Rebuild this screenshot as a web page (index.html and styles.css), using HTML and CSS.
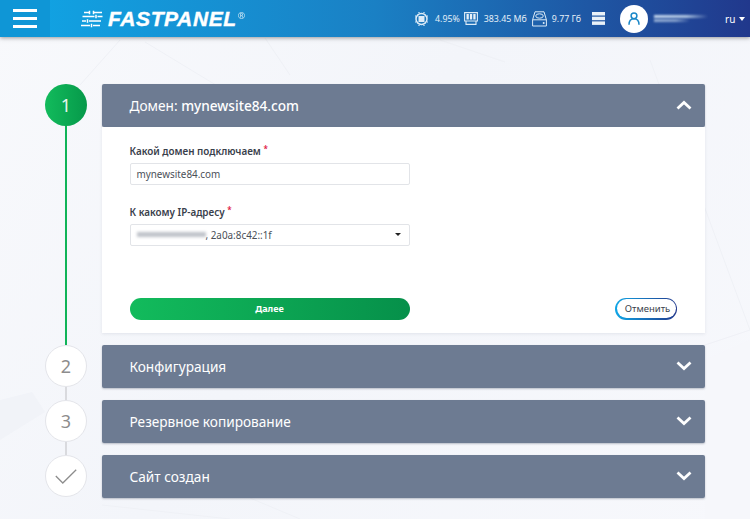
FILE: index.html
```html
<!DOCTYPE html>
<html lang="ru">
  <head>
    <meta charset="UTF-8" />
    <title>FASTPANEL</title>
    <link rel="stylesheet" href="styles.css">
  </head>
  <body>
    <!-- faint background shapes -->
    <svg class="bg_shapes" width="750" height="519" viewBox="0 0 750 519" fill="none" stroke="#eff1f6" stroke-width="1">
      <path d="M120 40L80 85M145 42L290 130M265 38L290 75" />
      <path d="M440 40L505 62M650 60L750 330L705 345" />
      <path d="M0 400L32 392L45 412L0 440z" fill="#f1f3f8" stroke="none" />
      <path d="M705 360L750 340V519H705z" fill="#f6f7fb" stroke="none" />
      <path d="M102 505L230 519M250 498L300 519" />
    </svg>

    <header class="topbar">
      <div class="menu_btn">
        <span></span><span></span><span></span>
      </div>
      <div class="logo">
        <svg class="logo_icon" width="22" height="18" viewBox="0 0 22 18" fill="none" stroke="#fff" stroke-width="1.5">
          <path d="M3 2.500h6M12 2.500h9M8.500 .8v3.400M12.500 .8v3.400" />
          <path d="M1.500 6.500h12M16.500 6.500h5M15 4.800v3.400" />
          <path d="M1 11h4M8 11h12M6.500 9.300v3.400" />
          <path d="M0 15.500h9M12 15.500h7M10.500 13.800v3.400" />
        </svg>
        <span class="logo_text">FASTPANEL</span>
        <span class="logo_reg">®</span>
      </div>
      <div class="stats">
        <svg class="stat_icon" width="15" height="16" viewBox="0 0 15 16" fill="none" stroke="#dcebf7" stroke-width="1.500">
          <circle cx="7.500" cy="8" r="5.500" />
          <rect x="5" y="5.500" width="5" height="5" fill="#dcebf7" stroke-width="1" />
          <path d="M1 5h1M1 11h1M13 5h1M13 11h1M5 1v1M10 1v1M5 14v1M10 14v1" stroke-width="1.200" />
        </svg>
        <span class="stat_val stat_cpu">4.95%</span>
        <svg class="stat_icon" width="14" height="13" viewBox="0 0 14 13" fill="none" stroke="#dcebf7" stroke-width="1.100">
          <path d="M.6 .6h12.800v8.400H.6zM2 12.400h10V9H2z" />
          <rect x="2.500" y="2" width="2.300" height="5.500" fill="#e8f1f8" stroke="none" />
          <rect x="5.900" y="2" width="2.300" height="5.500" fill="#e8f1f8" stroke="none" />
          <rect x="9.300" y="2" width="2.300" height="5.500" fill="#e8f1f8" stroke="none" />
        </svg>
        <span class="stat_val stat_ram">383.45 Мб</span>
        <svg class="stat_icon" width="15" height="16" viewBox="0 0 15 16" fill="none" stroke="#dcebf7" stroke-width="1">
          <path d="M3 .8h9l2.400 8V15H.6V8.800z" />
          <path d="M.6 8.800h13.800" />
          <ellipse cx="7.500" cy="5" rx="3.800" ry="2.200" />
          <circle cx="11.700" cy="12" r="1" fill="#dcebf7" stroke="none" />
        </svg>
        <span class="stat_val stat_disk">9.77 Гб</span>
        <svg class="stat_server" width="13" height="13" viewBox="0 0 13 13" fill="#e8f1f8">
          <rect width="13" height="3.500" />
          <rect y="4.700" width="13" height="3.500" />
          <rect y="9.400" width="13" height="3.500" />
        </svg>
      </div>
      <div class="avatar">
        <svg width="12" height="13" viewBox="0 0 12 13" fill="none" stroke="#1a87c8" stroke-width="1.500">
          <circle cx="6" cy="3.800" r="2.900" />
          <path d="M1 12.800c0-3.800 1.600-6 5-6s5 2.200 5 6" />
        </svg>
      </div>
      <div class="user_blur">
        <div class="blur_line"></div>
        <div class="blur_line blur_short"></div>
      </div>
      <div class="lang">ru <span class="caret caret_white"></span></div>
    </header>

    <main class="steps">
      <section class="step">
        <div class="step_mark">
          <div class="circle circle_active">1</div>
          <div class="line line_green"></div>
        </div>
        <div class="panel">
          <div class="panel_head">
            <div>Домен: <b>mynewsite84.com</b></div>
            <svg class="chevron" width="16" height="10" viewBox="0 0 16 10" fill="none" stroke="#fff" stroke-width="2.800">
              <path d="M1.500 8.500L8 2.500l6.500 6" />
            </svg>
          </div>
          <form class="panel_body">
            <label class="field_label">Какой домен подключаем <i class="req">*</i></label>
            <div class="field">mynewsite84.com</div>
            <label class="field_label label_ip">К какому IP-адресу <i class="req">*</i></label>
            <div class="field field_select">
              <span class="ip_blur"></span>
              <span>, 2a0a:8c42::1f</span>
              <span class="caret caret_dark"></span>
            </div>
            <div class="actions">
              <button type="button" class="btn_next">Далее</button>
              <button type="button" class="btn_cancel"><span>Отменить</span></button>
            </div>
          </form>
        </div>
      </section>

      <section class="step">
        <div class="step_mark">
          <div class="circle">2</div>
          <div class="line"></div>
        </div>
        <div class="panel">
          <div class="panel_head">
            <div>Конфигурация</div>
            <svg class="chevron" width="16" height="10" viewBox="0 0 16 10" fill="none" stroke="#fff" stroke-width="2.800">
              <path d="M1.500 1.500L8 7.500l6.500-6" />
            </svg>
          </div>
        </div>
      </section>

      <section class="step">
        <div class="step_mark">
          <div class="circle">3</div>
          <div class="line"></div>
        </div>
        <div class="panel">
          <div class="panel_head">
            <div>Резервное копирование</div>
            <svg class="chevron" width="16" height="10" viewBox="0 0 16 10" fill="none" stroke="#fff" stroke-width="2.800">
              <path d="M1.500 1.500L8 7.500l6.500-6" />
            </svg>
          </div>
        </div>
      </section>

      <section class="step">
        <div class="step_mark">
          <div class="circle">
            <svg width="22" height="15" viewBox="0 0 22 15" fill="none" stroke="#8d8d8d" stroke-width="1.300">
              <path d="M.8 7l7 7L21.200 .8" />
            </svg>
          </div>
        </div>
        <div class="panel">
          <div class="panel_head">
            <div>Сайт создан</div>
            <svg class="chevron" width="16" height="10" viewBox="0 0 16 10" fill="none" stroke="#fff" stroke-width="2.800">
              <path d="M1.500 1.500L8 7.500l6.500-6" />
            </svg>
          </div>
        </div>
      </section>
    </main>
  </body>
</html>
```
FILE: styles.css
```css
* {
  box-sizing: border-box;
}

html,
body {
  height: 100%;
}

body {
  margin: 0;
  overflow: hidden;
  background-color: #f4f6fb;
  background-image: linear-gradient(125deg, #f8f9fc 0%, #f3f5fa 45%, #f7f8fc 100%);
  font-family: "Noto Sans", "Open Sans", sans-serif;
  color: #333a45;
}

.bg_shapes {
  position: absolute;
  top: 0;
  left: 0;
}

/* top bar */
.topbar {
  position: relative;
  display: flex;
  align-items: center;
  height: 37px;
  background: linear-gradient(90deg, #10a6e6 0%, #1a80c4 50%, #21388c 100%);
  box-shadow: 0 1px 4px rgba(60, 60, 60, 0.5);
  color: #fff;
}

.menu_btn {
  display: flex;
  flex-direction: column;
  justify-content: center;
  gap: 5px;
  width: 50px;
  height: 37px;
  padding: 0 13px;
  background-color: #0f96d6;
}

.menu_btn span {
  display: block;
  height: 3px;
  background-color: #fff;
}

.logo {
  display: flex;
  align-items: center;
  width: 364px;
  padding-left: 31px;
}

.logo_icon {
  margin-right: 5px;
}

.logo_text {
  font-family: "Liberation Sans", sans-serif;
  font-size: 21px;
  font-weight: 700;
  font-style: italic;
  letter-spacing: 0.6px;
  -webkit-text-stroke: 0.4px #fff;
}

.logo_reg {
  align-self: flex-start;
  margin: 2px 0 0 1px;
  font-size: 9px;
  opacity: 0.8;
}

.stats {
  display: flex;
  align-items: center;
  width: 206px;
  font-size: 8.8px;
  color: #e4eff8;
}

.stat_val {
  margin-left: 6px;
}

.stat_cpu {
  margin-right: 4px;
}

.stat_ram {
  margin-right: 5px;
}

.stat_disk {
  margin-left: 5px;
}

.stat_server {
  margin-left: 11px;
}

.avatar {
  display: flex;
  justify-content: center;
  align-items: center;
  width: 28px;
  height: 28px;
  border-radius: 50%;
  background-color: #fff;
}

.user_blur {
  width: 54px;
  margin: 0 17px 0 6px;
}

.blur_line {
  height: 3px;
  margin-bottom: 1px;
  background: linear-gradient(90deg, #c6d8ee, #b0c6e2 60%, rgba(176, 198, 226, 0));
  filter: blur(1px);
}

.blur_short {
  width: 36px;
  opacity: 0.7;
}

.lang {
  display: flex;
  align-items: center;
  gap: 4px;
  font-size: 10px;
}

.caret {
  display: inline-block;
  width: 0;
  height: 0;
  border-left: 3.5px solid transparent;
  border-right: 3.5px solid transparent;
}

.caret_white {
  border-top: 4px solid #fff;
}

.caret_dark {
  margin-left: auto;
  border-top: 3.5px solid #222;
}

/* steps */
.steps {
  position: relative;
  padding: 47px 45px 0 45px;
}

.step {
  display: flex;
  gap: 15px;
}

.step_mark {
  display: flex;
  flex-direction: column;
  align-items: center;
  flex: none;
  width: 42px;
}

.circle {
  display: flex;
  flex: none;
  justify-content: center;
  align-items: center;
  width: 42px;
  height: 42px;
  border: 1px solid #e4e5ea;
  border-radius: 50%;
  background-color: #fff;
  font-size: 18px;
  color: #8d8d8d;
}

.circle_active {
  border: none;
  background: linear-gradient(90deg, #12bb5c, #06994a);
  color: #e9f6ee;
}

.line {
  flex: 1;
  width: 2px;
  background-color: #d9dade;
}

.line_green {
  background-color: #10b458;
}

.panel {
  flex: 1;
  margin-bottom: 12.5px;
}

.panel_head {
  display: flex;
  justify-content: space-between;
  align-items: center;
  height: 42.5px;
  padding: 0 13px 0 27.5px;
  border-radius: 2px;
  background-color: #6d7b92;
  box-shadow: 0 1px 2px rgba(70, 80, 100, 0.35);
  font-size: 13.65px;
  color: #fff;
}

.panel_head b {
  font-weight: 500;
}

.panel_body {
  height: 206px;
  padding: 17px 28px 0 27.5px;
  background-color: #fff;
  box-shadow: 0 1px 3px rgba(90, 100, 120, 0.12);
}

.field_label {
  display: block;
  height: 14px;
  margin-bottom: 5px;
  font-size: 9.9px;
  font-weight: 600;
  line-height: 14px;
  color: #39404b;
}

.label_ip {
  margin-top: 20px;
}

.req {
  position: relative;
  top: -3px;
  font-size: 8px;
  font-style: normal;
  color: #e0173f;
}

.field {
  display: flex;
  align-items: center;
  width: 280px;
  height: 22px;
  padding: 0 6px;
  border: 1px solid #e2e4e8;
  border-radius: 2px;
  background-color: #fff;
  font-size: 9.9px;
  color: #4a4f58;
}

.field_select {
  padding-right: 8px;
}

.ip_blur {
  width: 69px;
  height: 5px;
  background-color: #bfc3ca;
  filter: blur(1.5px);
}

.actions {
  display: flex;
  justify-content: space-between;
  align-items: center;
  margin-top: 52px;
}

.btn_next {
  width: 280px;
  height: 22px;
  padding: 0;
  border: none;
  border-radius: 11px;
  background: linear-gradient(90deg, #12bb5c, #06904a);
  font-family: inherit;
  font-size: 9px;
  font-weight: 700;
  color: #fff;
}

.btn_cancel {
  width: 62px;
  height: 22px;
  padding: 1.5px;
  border: none;
  border-radius: 11px;
  background: linear-gradient(90deg, #10a6e6, #21388c);
  font-family: inherit;
}

.btn_cancel span {
  display: flex;
  justify-content: center;
  align-items: center;
  height: 100%;
  padding-left: 3px;
  border-radius: 10px;
  background-color: #fff;
  font-size: 9.5px;
  color: #39404b;
}
```
